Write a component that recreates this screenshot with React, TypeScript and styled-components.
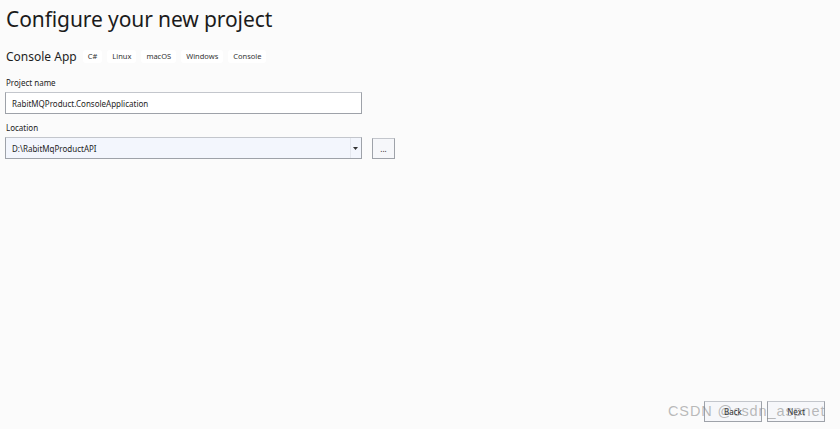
import React from "react";
import styled, { createGlobalStyle } from "styled-components";

const Global = createGlobalStyle`
  html, body { margin: 0; padding: 0; background: #fbfbfb; }
  body { font-family: "Noto Sans", "Open Sans", sans-serif; color: #1e1e1e; }
`;

const Page = styled.div`
  position: relative;
  width: 840px;
  height: 429px;
  box-sizing: border-box;
  padding: 4px 0 0 6px;
  display: flex;
  flex-direction: column;
  overflow: hidden;
`;

const Title = styled.h1`
  margin: 0;
  font-size: 21px;
  font-weight: 400;
  line-height: 30px;
  color: #1b1b1b;
  letter-spacing: -0.1px;
`;

const SubRow = styled.div`
  display: flex;
  align-items: center;
  gap: 5px;
  margin-top: 15px;
`;

const AppName = styled.span`
  font-size: 12px;
  line-height: 15px;
  margin-right: 1px;
`;

const Tag = styled.span`
  background: #ffffff;
  border-radius: 3px;
  font-size: 7.5px;
  line-height: 13px;
  padding: 0 5px;
  color: #333;
`;

const Label = styled.div<{ $top: number }>`
  font-size: 8px;
  line-height: 11px;
  margin-top: ${(p) => p.$top}px;
  color: #222;
`;

const Field = styled.div`
  display: flex;
  align-items: center;
  gap: 10px;
  margin-top: 4px;
  margin-left: -1px;
`;

const Input = styled.div<{ $select?: boolean }>`
  width: 357px;
  height: 22px;
  box-sizing: border-box;
  border: 1px solid #9ea2a9;
  border-top-color: #c3c6cc;
  background: ${(p) => (p.$select ? "#f3f6fd" : "#ffffff")};
  display: flex;
  align-items: center;
  padding-left: 6px;
  font-size: 8px;
  color: #1e1e1e;
`;

const InputText = styled.span`
  flex: 1;
`;

const Arrow = styled.span`
  width: 9px;
  height: 100%;
  display: flex;
  align-items: center;
  justify-content: center;
  border-left: 1px solid #e4e7ee;
  margin-right: 1px;
`;

const SmallButton = styled.button<{ $w: number }>`
  width: ${(p) => p.$w}px;
  height: 21px;
  box-sizing: border-box;
  border: 1px solid #9ea2a9;
  border-top-color: #c3c6cc;
  background: #f6f7fa;
  font-family: inherit;
  font-size: 8px;
  color: #1e1e1e;
  padding: 0;
  display: flex;
  align-items: center;
  justify-content: center;
`;

const Spacer = styled.div`
  flex: 1;
`;

const Footer = styled.div`
  display: flex;
  justify-content: flex-end;
  gap: 5px;
  padding-right: 15px;
  margin-bottom: 7px;
`;

const Watermark = styled.div`
  position: absolute;
  left: 668px;
  top: 403px;
  font-family: "Liberation Sans", sans-serif;
  font-size: 14.5px;
  color: rgba(120, 120, 120, 0.5);
  letter-spacing: 0.9px;
  pointer-events: none;
`;

export default function App() {
  return (
    <>
      <Global />
      <Page>
        <Title>Configure your new project</Title>
        <SubRow>
          <AppName>Console App</AppName>
          <Tag>C#</Tag>
          <Tag>Linux</Tag>
          <Tag>macOS</Tag>
          <Tag>Windows</Tag>
          <Tag>Console</Tag>
        </SubRow>
        <Label $top={13}>Project name</Label>
        <Field>
          <Input>
            <InputText>RabitMQProduct.ConsoleApplication</InputText>
          </Input>
        </Field>
        <Label $top={8}>Location</Label>
        <Field>
          <Input $select>
            <InputText>D:\RabitMqProductAPI</InputText>
            <Arrow>
              <svg width="5" height="3" viewBox="0 0 5 3">
                <path d="M0 0 H5 L2.5 3 Z" fill="#333" />
              </svg>
            </Arrow>
          </Input>
          <SmallButton $w={23}>...</SmallButton>
        </Field>
        <Spacer />
        <Footer>
          <SmallButton $w={58}>Back</SmallButton>
          <SmallButton $w={58}>Next</SmallButton>
        </Footer>
        <Watermark>CSDN @csdn_aspnet</Watermark>
      </Page>
    </>
  );
}
